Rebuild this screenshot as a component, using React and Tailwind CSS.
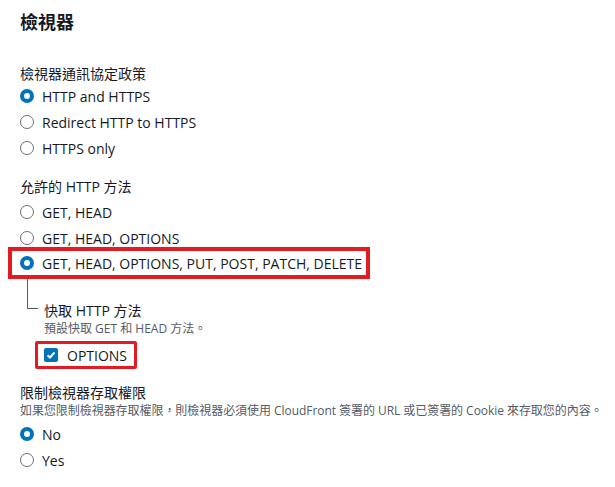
import React from "react";

const FONT = { fontFamily: '"Open Sans", "Noto Sans CJK TC", sans-serif' };

function Radio({ checked, label, h = "h-[26px]" }) {
  return (
    <div className={"flex items-center " + h}>
      {checked ? (
        <span className="w-[14px] h-[14px] rounded-full bg-[#0073bb] flex items-center justify-center shrink-0">
          <span className="w-[6px] h-[6px] rounded-full bg-white" />
        </span>
      ) : (
        <span className="w-[14px] h-[14px] rounded-full border-[1.5px] border-[#687078] shrink-0" />
      )}
      <span className="ml-[8px] text-[14px] text-[#16191f]">{label}</span>
    </div>
  );
}

export default function App() {
  return (
    <div className="bg-white w-[615px] h-[487px] pl-[20px] pt-[8px] text-[#16191f]" style={FONT}>
      <div className="text-[18px] font-bold leading-[28px]">檢視器</div>

      <div className="mt-[28px] text-[14px] leading-[20px]">檢視器通訊協定政策</div>
      <div className="mt-[-1px]">
        <Radio checked label="HTTP and HTTPS" />
        <Radio label="Redirect HTTP to HTTPS" />
        <Radio label="HTTPS only" />
      </div>

      <div className="mt-[16px] text-[14px] leading-[20px]">允許的 HTTP 方法</div>
      <div className="mt-[2px]">
        <Radio label="GET, HEAD" />
        <Radio label="GET, HEAD, OPTIONS" />
        <div className="mt-[-4px] ml-[-12px] w-[362px] border-[4px] border-[#e31b23] pl-[8px]">
          <Radio checked label="GET, HEAD, OPTIONS, PUT, POST, PATCH, DELETE" h="h-[24px]" />
        </div>
      </div>

      <div className="flex">
        <div className="ml-[7px] w-[11px] h-[30px] border-l border-b border-[#545b64]" />
        <div className="ml-[6px] mt-[23px]">
          <div className="text-[14px] leading-[18px]">快取 HTTP 方法</div>
          <div className="text-[12px] leading-[18px] text-[#545b64]">預設快取 GET 和 HEAD 方法。</div>
          <div className="ml-[-9px] mt-[3px] w-[102px] border-[3px] border-[#e31b23] rounded-[2px] pl-[6px] h-[28px] flex items-center">
            <span className="w-[14px] h-[14px] rounded-[2px] bg-[#0073bb] flex items-center justify-center">
              <svg width="10" height="10" viewBox="0 0 10 10">
                <path d="M1.5 5.2 L4 7.5 L8.5 2.5" stroke="white" strokeWidth="2" fill="none" />
              </svg>
            </span>
            <span className="ml-[9px] text-[14px]">OPTIONS</span>
          </div>
        </div>
      </div>

      <div className="mt-[15px] text-[14px] leading-[18px]">限制檢視器存取權限</div>
      <div className="text-[12px] leading-[18px] text-[#545b64] tracking-[-0.05px]">
        如果您限制檢視器存取權限，則檢視器必須使用 CloudFront 簽署的 URL 或已簽署的 Cookie 來存取您的內容。
      </div>
      <div className="mt-[1px]">
        <Radio checked label="No" />
        <Radio label="Yes" />
      </div>
    </div>
  );
}
